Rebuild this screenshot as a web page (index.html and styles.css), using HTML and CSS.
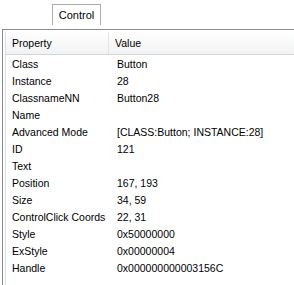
FILE: index.html
```html
<!DOCTYPE html>
<html lang="en">
<head>
    <meta charset="UTF-8">
    <title>Control</title>
    <link rel="stylesheet" href="styles.css">
</head>
<body>

<!-- 탭 영역 -->
<div class="tabs">
    <div class="tab">Control</div>
</div>

<!-- 컨트롤 속성 목록 -->
<div class="panel">
    <div class="list">
        <div class="head">
            <div class="cell prop">Property</div>
            <div class="cell value">Value</div>
        </div>
        <div class="row"><div class="cell">Class</div><div class="cell">Button</div></div>
        <div class="row"><div class="cell">Instance</div><div class="cell">28</div></div>
        <div class="row"><div class="cell">ClassnameNN</div><div class="cell">Button28</div></div>
        <div class="row"><div class="cell">Name</div><div class="cell"></div></div>
        <div class="row"><div class="cell">Advanced Mode</div><div class="cell">[CLASS:Button; INSTANCE:28]</div></div>
        <div class="row"><div class="cell">ID</div><div class="cell">121</div></div>
        <div class="row"><div class="cell">Text</div><div class="cell"></div></div>
        <div class="row"><div class="cell">Position</div><div class="cell">167, 193</div></div>
        <div class="row"><div class="cell">Size</div><div class="cell">34, 59</div></div>
        <div class="row"><div class="cell">ControlClick Coords</div><div class="cell">22, 31</div></div>
        <div class="row"><div class="cell">Style</div><div class="cell">0x50000000</div></div>
        <div class="row"><div class="cell">ExStyle</div><div class="cell">0x00000004</div></div>
        <div class="row"><div class="cell">Handle</div><div class="cell">0x000000000003156C</div></div>
    </div>
</div>

</body>
</html>
```

FILE: styles.css
```css
body {
    font-family: 'Liberation Sans', Arial, sans-serif;
    font-size: 10.5px;
    color: #000;
    margin: 0;
    padding: 0;
    background-color: #ffffff;
    overflow: hidden;
}

.tabs {
    height: 29px;
    padding-left: 52px;
    padding-top: 4px;
    box-sizing: border-box;
    background-color: #ffffff;
}

.tab {
    width: 49px;
    height: 21px;
    border: 1px solid #adadad;
    border-bottom: none;
    box-sizing: border-box;
    display: flex;
    align-items: center;
    justify-content: center;
    font-size: 11px;
}

.panel {
    margin-left: 2px;
    border-top: 1px solid #898c95;
    border-left: 1px solid #898c95;
    padding: 2px 0 0 2px;
    height: 260px;
}

.list {
    border-left: 1px solid #d5dfe5;
    height: 100%;
}

.head {
    display: flex;
    height: 22px;
    align-items: center;
    background: linear-gradient(#ffffff, #f1f2f4);
    border-bottom: 1px solid #d5d5d5;
}

.head .prop {
    width: 96px;
    padding-left: 6px;
    border-right: 1px solid #e3e5e8;
    height: 100%;
    display: flex;
    align-items: center;
}

.head .value {
    padding-left: 6px;
}

.row {
    display: flex;
    height: 17px;
    align-items: center;
}

.row .cell:first-child {
    width: 99px;
    padding-left: 6px;
    white-space: nowrap;
}

.row .cell:last-child {
    padding-left: 6px;
    white-space: nowrap;
}
```
